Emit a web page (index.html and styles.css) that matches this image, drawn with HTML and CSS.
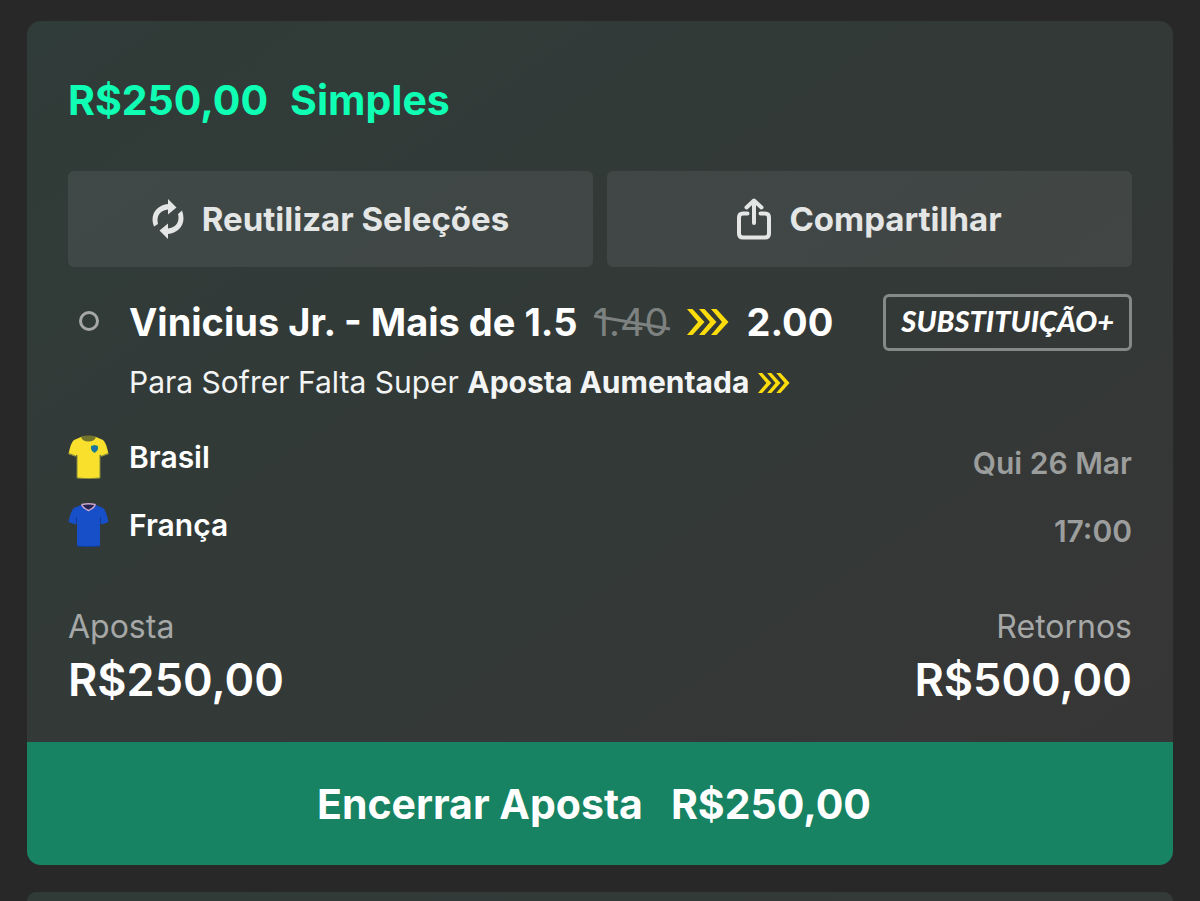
FILE: index.html
```html
<!DOCTYPE html>
<html lang="pt-BR">
<head>
<meta charset="utf-8">
<meta name="viewport" content="width=device-width, initial-scale=1">
<title>Minhas Apostas</title>
<link rel="stylesheet" href="styles.css">
</head>
<body>
<svg class="defs" aria-hidden="true">
  <symbol id="boost" viewBox="0 0 42 26">
    <path d="M0 0h5.500l12 13-12 13H0l11-13zM12 0h5.500l12 13-12 13H12l11-13zM24 0h5.500l12 13-12 13H24l11-13z"/>
  </symbol>
</svg>
<main class="bets">
  <article class="bet">
    <div class="bet-body">
      <h1 class="bet-title"><span>R$250,00</span><span>Simples</span></h1>
      <div class="actions">
        <button class="action" type="button">
          <svg class="icon-reuse" viewBox="0 0 32 42" aria-hidden="true">
            <path d="M16 1l8.500 8.500-8.500 7v-5C9 12 5.500 17 5.500 22q0 2 .5 4l-4 2.500Q.5 25.500.5 21.500C.5 13 7.500 6.500 16 6z"/>
            <path d="M16 41l-8.500-8.500 8.500-7v5c7-.5 10.500-5.500 10.500-10.500q0-2-.5-4l4-3.500q1.500 3.500 1.500 8C31.500 29 24.500 35.500 16 36z"/>
          </svg>
          <span>Reutilizar Seleções</span>
        </button>
        <button class="action" type="button">
          <svg class="icon-share" viewBox="0 0 34 42" aria-hidden="true">
            <path d="M10.500 15.500H6q-4 0-4 4v16q0 4 4 4h22q4 0 4-4v-16q0-4-4-4h-4.500"/>
            <path d="M17 25V3M9.500 9.500L17 2.500l7.500 7"/>
          </svg>
          <span>Compartilhar</span>
        </button>
      </div>
      <section class="selection">
        <div class="selection-head">
          <span class="marker"></span>
          <h2 class="selection-name">Vinicius Jr. - Mais de 1.5</h2>
          <span class="odds">
            <s class="odds-old">1.40<svg class="strike" viewBox="0 0 78 18" aria-hidden="true"><path d="M1 2l76 13"/></svg></s>
            <svg class="boost" aria-hidden="true"><use href="#boost"/></svg>
            <strong class="odds-new">2.00</strong>
          </span>
          <span class="badge">SUBSTITUIÇÃO+</span>
        </div>
        <p class="market">Para Sofrer Falta Super <strong>Aposta Aumentada</strong> <svg class="boost boost-small" aria-hidden="true"><use href="#boost"/></svg></p>
      </section>
      <section class="match">
        <ul class="teams">
          <li class="team">
            <svg class="shirt" viewBox="0 0 41 44" aria-hidden="true">
              <path fill="#f8e02c" d="M13 2h15l7 3q3 2 5.500 14l-7 2.500-1.500-2V43q-12 1.500-23 0V19.500l-1.500 2-7-2.500Q3 7 6 5z"/>
              <path fill="none" stroke="#7f873d" d="M1 18.500l6.500 2.500M40 18.500L33.500 21M9 20v23q11 1.500 23 0V20"/>
              <path fill="#74752c" d="M13 1.500q7.500-2 15 0-1 5-7.500 5T13 1.500z"/>
              <path fill="#16818b" d="M23 11l3.500-1 3.500 1v3q-.5 2.500-3.500 4-3-1.500-3.500-4z"/>
              <circle cx="26.500" cy="13.500" r="2" fill="#2468b3"/>
            </svg>
            <span>Brasil</span>
          </li>
          <li class="team">
            <svg class="shirt" viewBox="0 0 41 44" aria-hidden="true">
              <path fill="#174fc8" d="M13 2h15l7 3q3 2 5.500 14l-7 2.500-1.500-2V43q-12 1.500-23 0V19.500l-1.500 2-7-2.500Q3 7 6 5z"/>
              <path fill="none" stroke="#123d97" d="M8.500 14v6M32.500 14v6M9 43q11 1.500 23 0"/>
              <path fill="#272454" stroke="#c9a5c9" stroke-width="1.500" d="M14 1.500q6.500-1.500 13 0 0 3-6.500 6-6.500-3-6.500-6z"/>
            </svg>
            <span>França</span>
          </li>
        </ul>
        <div class="kickoff"><span>Qui 26 Mar</span><time datetime="17:00">17:00</time></div>
      </section>
      <dl class="totals">
        <div><dt>Aposta</dt><dd>R$250,00</dd></div>
        <div class="returns"><dt>Retornos</dt><dd>R$500,00</dd></div>
      </dl>
    </div>
    <button class="cashout" type="button"><span>Encerrar Aposta</span><span>R$250,00</span></button>
  </article>
  <article class="bet bet-next"></article>
</main>
</body>
</html>
```
FILE: styles.css
```css
* {
  box-sizing: border-box;
}

html {
  background: #282828;
}

body {
  margin: 0;
  color: #fff;
  font-family: Inter, "Liberation Sans", sans-serif;
}

h1, h2, p, ul, dl, dd {
  margin: 0;
  padding: 0;
}

button {
  border: 0;
  font: inherit;
  cursor: pointer;
}

.defs {
  position: absolute;
  width: 0;
  height: 0;
}

.bets {
  display: flex;
  flex-direction: column;
  gap: 27px;
  min-height: 100vh;
  padding: 21px 27px 0;
}

.bet {
  overflow: hidden;
  border-radius: 14px;
  background: linear-gradient(145deg, #303c39 0%, #333937 55%, #373636 90%);
}

.bet-next {
  flex: 1;
  border-radius: 14px 14px 0 0;
  background: linear-gradient(90deg, #303b38, #343a38);
}

.bet-body {
  padding: 54px 41px 36px;
}

.bet-title {
  display: flex;
  gap: 22px;
  color: #0fffb4;
  font-size: 41px;
  font-weight: 700;
  line-height: 50px;
}

.actions {
  display: grid;
  grid-template-columns: 1fr 1fr;
  gap: 14px;
  margin-top: 46px;
}

.action {
  display: flex;
  align-items: center;
  justify-content: center;
  gap: 18px;
  padding: 24px 0;
  border-radius: 6px;
  background: rgba(255, 255, 255, 0.07);
  color: #e4e6e5;
  font-size: 33px;
  font-weight: 700;
  line-height: 48px;
}

.icon-reuse {
  width: 32px;
  height: 42px;
  fill: #e4e6e5;
}

.icon-share {
  width: 34px;
  height: 42px;
  fill: none;
  stroke: #e4e6e5;
  stroke-width: 4;
  stroke-linecap: round;
  stroke-linejoin: round;
}

.selection {
  margin-top: 27px;
}

.selection-head {
  display: flex;
  align-items: center;
}

.marker {
  width: 20px;
  height: 20px;
  margin: 0 30px 4px 11px;
  border: 3px solid #a5a8a7;
  border-radius: 50%;
}

.selection-name {
  padding-bottom: 2px;
  font-size: 38px;
  font-weight: 700;
  line-height: 44px;
}

.odds {
  display: flex;
  align-items: center;
  margin-left: 16px;
  padding-bottom: 2px;
  font-size: 38px;
  line-height: 44px;
}

.odds-old {
  position: relative;
  color: #7d8180;
  text-decoration: none;
}

.strike {
  position: absolute;
  top: 14px;
  left: -1px;
  width: 78px;
  height: 18px;
  fill: none;
  stroke: #7d8180;
  stroke-width: 3;
}

.boost {
  width: 42px;
  height: 26px;
  margin: 0 18px;
  fill: #fcdc0b;
}

.odds-new {
  font-weight: 700;
}

.badge {
  margin-left: auto;
  padding: 8px 15px 11px;
  border: 3px solid #858988;
  border-radius: 6px;
  font-family: Lato, "Open Sans", sans-serif;
  font-size: 29px;
  font-style: italic;
  font-weight: 900;
  line-height: 32px;
}

.market {
  margin: 14px 0 0 61px;
  color: #f3f4f4;
  font-size: 30px;
  line-height: 34px;
}

.market strong {
  font-weight: 700;
}

.boost-small {
  width: 32px;
  height: 20px;
  margin: 0;
}

.match {
  display: flex;
  justify-content: space-between;
  margin-top: 36px;
  font-size: 30px;
  font-weight: 600;
  line-height: 44px;
}

.teams,
.kickoff {
  display: flex;
  flex-direction: column;
  gap: 24px;
}

.teams {
  list-style: none;
}

.team {
  display: flex;
  gap: 20px;
}

.shirt {
  width: 41px;
  height: 44px;
}

.kickoff {
  align-items: flex-end;
  padding-top: 6px;
  color: #9c9e9d;
}

.totals {
  display: flex;
  justify-content: space-between;
  margin-top: 57px;
}

.totals dt {
  color: #a6a8a7;
  font-size: 32px;
  line-height: 34px;
}

.totals dd {
  margin-top: 10px;
  font-size: 45px;
  font-weight: 600;
  line-height: 52px;
}

.returns {
  text-align: right;
}

.cashout {
  display: flex;
  justify-content: center;
  gap: 28px;
  width: 100%;
  padding: 37px 12px 36px 0;
  background: #178362;
  color: #fff;
  font-size: 41px;
  font-weight: 700;
  line-height: 50px;
}
```
